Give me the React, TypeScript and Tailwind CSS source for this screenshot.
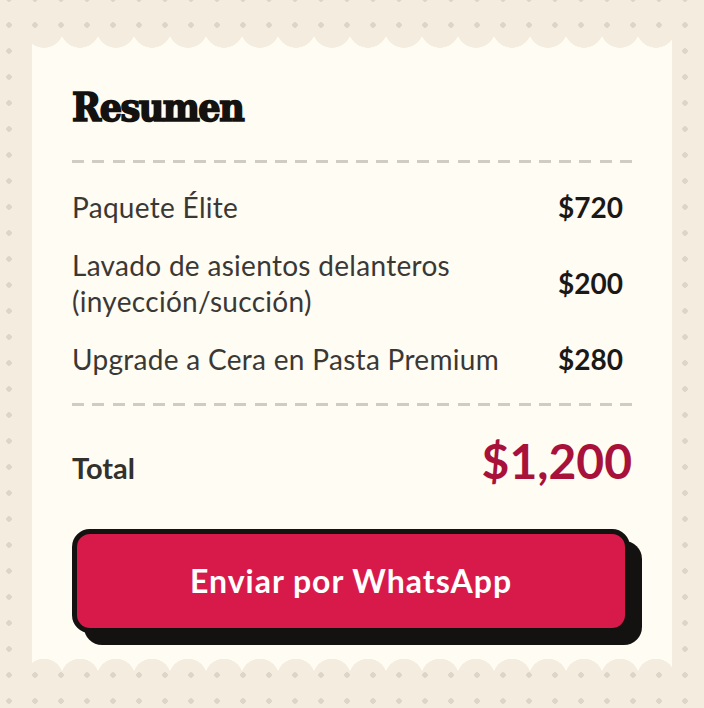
const items = [
    {label: "Paquete Élite", price: "$720"},
    {label: "Lavado de asientos delanteros (inyección/succión)", price: "$200"},
    {label: "Upgrade a Cera en Pasta Premium", price: "$280"},
];

function Dashed() {
    return (
        <div
            className="h-[3px] w-full bg-[repeating-linear-gradient(90deg,#d0ccc4_0_12px,transparent_12px_20.3px)]"/>
    );
}

export default function App() {
    return (
        <div
            className="h-[708px] w-full overflow-hidden bg-[#f4ecdf] bg-[radial-gradient(circle,#ddd5c7_2.5px,transparent_3px)] bg-[length:26px_26px] bg-[position:-4px_-14px] px-8 pt-8 font-['Lato','Noto_Sans',sans-serif]">
            {/* top scallop edge */}
            <div
                className="h-4 w-full bg-[#fffcf3] [mask-image:radial-gradient(circle_at_50%_-4px,transparent_19.5px,#000_20px)] [mask-size:36px_16px] [mask-position:-6px_0]"/>

            <div className="bg-[#fffcf3] px-10 pt-[39px] pb-[26px]">
                <h1 className="text-[39px] leading-[40px] font-bold text-[#141210] font-['DejaVu_Serif_Condensed','DejaVu_Serif',serif] tracking-[-1.5px] [-webkit-text-stroke:1.6px_#141210]">
                    Resumen
                </h1>

                <div className="mt-[33px]">
                    <Dashed/>
                </div>

                <div className="py-[15px]">
                    {items.map((item) => (
                        <div key={item.price} className="flex items-center justify-between gap-6 py-[11px]">
                            <span className="text-[28px] leading-[36px] tracking-[0.3px] text-[#3a3835]">{item.label}</span>
                            <span className="shrink-0 pr-[9px] text-[28px] leading-[36px] font-bold text-[#1b1917]">
                                {item.price}
                            </span>
                        </div>
                    ))}
                </div>

                <Dashed/>

                <div className="mt-[27px] flex items-baseline justify-between">
                    <span className="text-[29px] font-bold text-[#33312e]">Total</span>
                    <span className="text-[48px] leading-[56px] font-bold text-[#a8123a]">$1,200</span>
                </div>

                <button
                    className="mt-[39px] flex h-[104px] w-[558px] items-center justify-center rounded-[18px] border-[5px] border-[#141210] bg-[#d81a4a] text-[32px] font-bold tracking-[1px] text-white shadow-[12px_12px_0_#141210]">
                    Enviar por WhatsApp
                </button>
            </div>

            {/* bottom scallop edge */}
            <div
                className="h-[18px] w-full bg-[#fffcf3] [mask-image:radial-gradient(circle_at_50%_19px,transparent_19px,#000_19.5px)] [mask-size:36px_18px] [mask-position:-6px_0]"/>
        </div>
    );
}
